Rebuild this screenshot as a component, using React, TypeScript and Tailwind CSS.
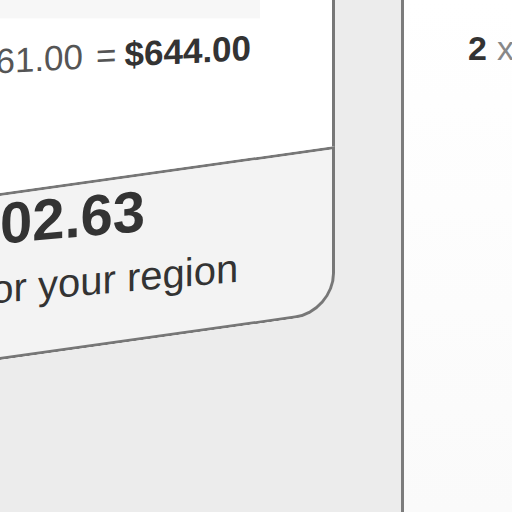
export default function App() {
  return (
    <div className="flex h-[512px] w-[512px] overflow-hidden bg-white font-['Liberation_Sans',Arial,sans-serif]">
      {/* Left panel */}
      <div className="relative h-full w-[404px] shrink-0 overflow-hidden border-r-[3px] border-[#7c7c7c] bg-[#ececec]">
        <div className="ml-[-300px] mt-[-60px] w-[635px] origin-top-right skew-y-[-8deg]">
          {/* Order total */}
          <div className="h-[206px] border-r-[3px] border-[#777] bg-white pl-[276px]">
            <div className="origin-top-right skew-y-[8deg]">
              <div className="ml-[-276px] h-[78px] w-[560px] bg-[#f7f7f7]" />
            </div>
            <div className="mt-[-24px] origin-left skew-y-[5deg] whitespace-nowrap text-[35px] leading-none text-[#555]">
              <span>$61.00</span>
              <span className="ml-[13px]">=</span>
              <span className="ml-[8px] font-bold text-[#333]">$644.00</span>
            </div>
          </div>
          {/* Regional price */}
          <div className="h-[167px] rounded-br-[40px] border-y-[3px] border-r-[3px] border-[#777] bg-[#f3f3f3] pl-[250px]">
            <div className="mt-[-4px] origin-left skew-y-[3deg] whitespace-nowrap text-[#333]">
              <div className="ml-[-63px] text-[58px] font-bold leading-none">$1,302.63</div>
              <div className="ml-[-72px] mt-[16px] text-[40px] leading-none">Price for your region</div>
            </div>
          </div>
        </div>
      </div>
      {/* Right panel */}
      <div className="flex-1 overflow-hidden bg-gradient-to-b from-white to-[#fafafa] pl-[64px] pt-[31px]">
        <div className="whitespace-nowrap text-[34px] leading-none">
          <span className="font-bold text-[#333]">2</span>
          <span className="ml-[10px] text-[#888]">x</span>
        </div>
      </div>
    </div>
  )
}
